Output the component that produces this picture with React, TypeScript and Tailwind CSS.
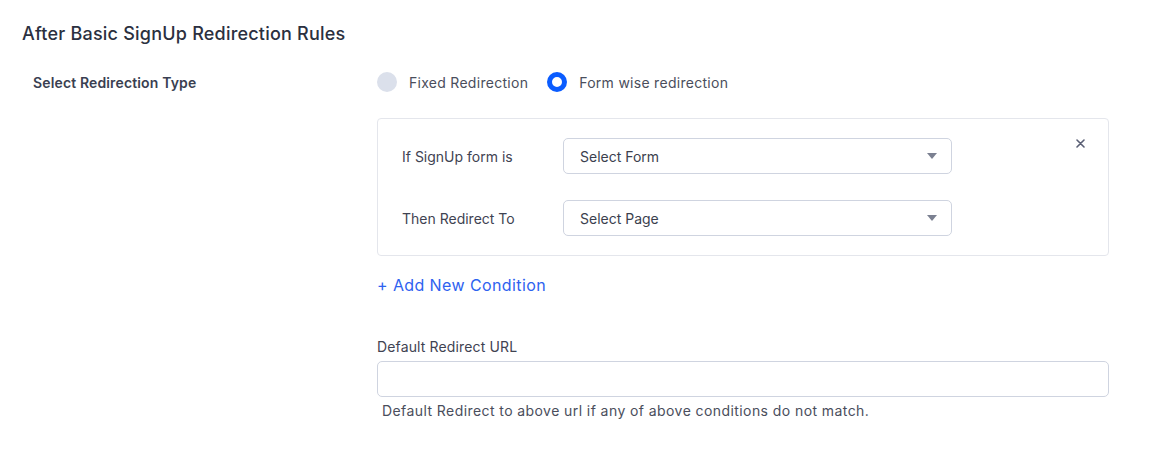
import React from "react";

const font = { fontFamily: "Inter, 'Noto Sans', sans-serif" };

const Caret = () => (
  <svg width="10" height="6" viewBox="0 0 10 6" className="shrink-0">
    <path d="M0 0h10L5 6z" fill="#7b8091" />
  </svg>
);

const SelectBox: React.FC<{ placeholder: string }> = ({ placeholder }) => (
  <div className="flex h-9 w-[389px] items-center justify-between rounded-[5px] border border-[#cfd4e0] bg-white pl-4 pr-[14px]">
    <span className="text-[14px] text-[#3b3f4e]">{placeholder}</span>
    <Caret />
  </div>
);

const Radio: React.FC<{ checked?: boolean; label: string }> = ({ checked, label }) => (
  <label className="flex items-center gap-3">
    {checked ? (
      <span className="h-5 w-5 rounded-full border-[5px] border-[#0a5cff] bg-white" />
    ) : (
      <span className="h-5 w-5 rounded-full bg-[#dbe0eb]" />
    )}
    <span className="text-[14px] tracking-[0.02em] text-[#4a4e5c]">{label}</span>
  </label>
);

export default function App() {
  return (
    <div className="min-h-screen bg-white" style={font}>
      <div className="pl-[22px] pt-[22px]">
        <h2 className="text-[18px] font-medium leading-6 tracking-[0.012em] text-[#2b3040]">
          After Basic SignUp Redirection Rules
        </h2>

        <div className="mt-[24px] flex">
          <div className="w-[355px] pl-[11px] pt-[2px] text-[14px] font-semibold tracking-[0.01em] text-[#3a3f51]">
            Select Redirection Type
          </div>

          <div className="w-[732px]">
            <div className="flex h-6 items-center gap-[19px]">
              <Radio label="Fixed Redirection" />
              <Radio checked label="Form wise redirection" />
            </div>

            <div className="relative mt-[24px] rounded-[4px] border border-[#e4e6ec] pb-[19px] pl-6 pt-[19px]">
              <div className="flex items-center">
                <span className="w-[161px] text-[14px] text-[#3f4352]">If SignUp form is</span>
                <SelectBox placeholder="Select Form" />
              </div>
              <div className="mt-[26px] flex items-center">
                <span className="w-[161px] text-[14px] text-[#3f4352]">Then Redirect To</span>
                <SelectBox placeholder="Select Page" />
              </div>
              <button className="absolute right-[23px] top-[20px] text-[#5a5f75]">
                <svg width="9" height="9" viewBox="0 0 9 9" className="block">
                  <path d="M1 1l7 7M8 1L1 8" stroke="#5a5f75" strokeWidth="1.6" strokeLinecap="round" />
                </svg>
              </button>
            </div>

            <div className="mt-[17px] text-[16px] leading-6 tracking-[0.025em] text-[#2e62f0]">
              + Add New Condition
            </div>

            <div className="mt-[40px] text-[14px] leading-5 tracking-[0.01em] text-[#3f4352]">
              Default Redirect URL
            </div>
            <div className="mt-[4px] h-9 w-full rounded-[5px] border border-[#cfd4e0] bg-white" />
            <p className="mt-[4px] pl-[5px] text-[14px] leading-5 tracking-[0.03em] text-[#4a4e5c]">
              Default Redirect to above url if any of above conditions do not match.
            </p>
          </div>
        </div>
      </div>
    </div>
  );
}
